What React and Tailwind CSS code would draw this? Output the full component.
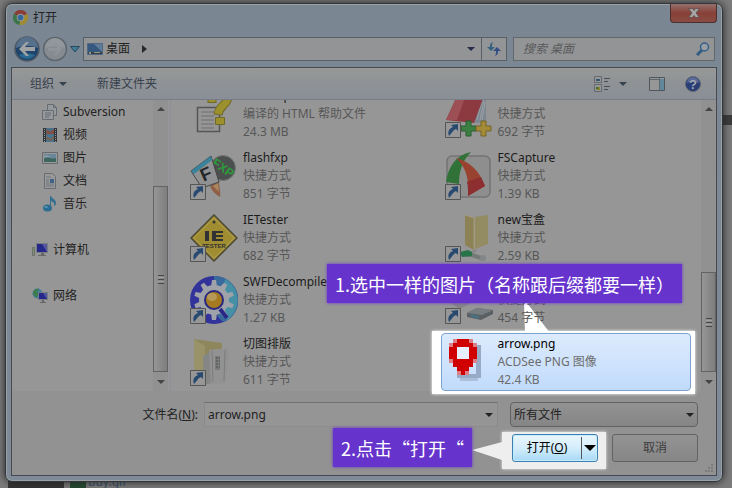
import React from 'react';

// --- Data ---
const SIDEBAR_ITEMS = [
  { id: 1, label: 'Subversion', icon: 'svn' },
  { id: 2, label: '视频', icon: 'video' },
  { id: 3, label: '图片', icon: 'picture' },
  { id: 4, label: '文档', icon: 'doc' },
  { id: 5, label: '音乐', icon: 'music' },
];

const FILES = [
  { id: 1, name: 'WinHelp', type: '编译的 HTML 帮助文件', size: '24.3 MB', icon: 'chm' },
  { id: 2, name: '', type: '快捷方式', size: '692 字节', icon: 'notes', shortcut: true },
  { id: 3, name: 'flashfxp', type: '快捷方式', size: '851 字节', icon: 'fxp', shortcut: true },
  { id: 4, name: 'FSCapture', type: '快捷方式', size: '1.39 KB', icon: 'capture', shortcut: true },
  { id: 5, name: 'IETester', type: '快捷方式', size: '682 字节', icon: 'ietester', shortcut: true },
  { id: 6, name: 'new宝盒', type: '快捷方式', size: '2.59 KB', icon: 'netfolder', shortcut: true },
  { id: 7, name: 'SWFDecompiler', type: '快捷方式', size: '1.27 KB', icon: 'swf', shortcut: true },
  { id: 8, name: '', type: '快捷方式', size: '454 字节', icon: 'drive', shortcut: true },
  { id: 9, name: '切图排版', type: '快捷方式', size: '611 字节', icon: 'folder', shortcut: true },
  { id: 10, name: 'arrow.png', type: 'ACDSee PNG 图像', size: '42.4 KB', icon: 'pin', selected: true },
];

const PIN_ROWS = ['.orrro.', 'orrrrro', 'rrwwwrr', 'rrwwwrr', 'rrwwwrr', 'orrrrro', '.rrrrr.', '..rrr..', '..oro..'];
const PIN_COLORS = { r: '#d00000', o: '#dc8088', w: '#e6effb' };

const GEAR_TEETH = [0, 36, 72, 108, 144, 180, 216, 252, 288, 324];

// --- Small icons ---
const SIDEBAR_ICONS = {
  svn: (
    <g fill="#979a9d" stroke="#666b74">
      <path d="M5.500.5h6l3 3v8h-9z" />
      <path d="M11.500.5v3h3" fill="none" />
      <path d="M.5 6.500h11v9H.500z" />
      <path d="M3 9h6M3 11h6M3 13h4" />
    </g>
  ),
  video: (
    <g>
      <path d="M1 1h14v14H1z" fill="#2f3539" />
      <path d="M4 1h8v7H4z" fill="#4b6f86" />
      <path d="M4 8h8v7H4z" fill="#4a7590" />
      <path d="m5 2 3 3 4-3v5H4z" fill="#844f42" />
      <path d="m5 9 3 3 4-3v3l-4 2-4-2z" fill="#79604c" />
      <path d="M2.500 2v13M13.500 2v13" stroke="#989898" strokeDasharray="1 1" />
    </g>
  ),
  picture: (
    <g>
      <path d="M.5 2.500h15v11H.500z" fill="#999" stroke="#666b70" />
      <path d="M2 4h12v8H2z" fill="#68869a" />
      <path d="M2 9c4-3 8 1 12-1v4H2z" fill="#3c665c" />
      <path d="M2 6c3-2 5 1 8 1H2z" fill="#8f9ba0" />
    </g>
  ),
  doc: (
    <g>
      <path d="M2.500.5h8l3 3v12h-11z" fill="#999" stroke="#696d72" />
      <path d="M4 4h5M4 7h3M4 9h3M4 11h8M4 13h8" stroke="#6f7780" />
      <path d="M8 6h4v4H8z" fill="#3f6288" />
    </g>
  ),
  music: (
    <g>
      <ellipse cx="5.500" cy="12" rx="4.500" ry="3.500" fill="#2b6d91" />
      <path d="M8 12V0h1c1 3 5 3 5 7 0 2-1 3-2 3 1-3-1-4-3-5v7z" fill="#356f90" />
      <ellipse cx="4" cy="11" rx="2" ry="1" fill="#5a90aa" />
    </g>
  ),
  computer: (
    <g>
      <path d="M4.500 1.500h11v9h-11z" fill="#26278a" stroke="#777b82" />
      <path d="m10 2 5 0v8z" fill="#5358a0" />
      <path d="M9 11h3v2h2v1H6v-1h3z" fill="#666" />
      <path d="M.5 5.500h2v8h-2z" fill="#829278" stroke="#6a6f68" />
    </g>
  ),
  network: (
    <g>
      <circle cx="5.500" cy="5.500" r="5" fill="#467ca0" />
      <path d="M1 4c1-3 4-4 6-3L5 4l2 2-3 4C3 8 2 7 1 7z" fill="#3b7d4d" />
      <path d="M6.500 4.500h9v7h-9z" fill="#26278a" stroke="#777b82" />
      <path d="m11 5 4 0v6z" fill="#5358a0" />
      <path d="M10 12h2v2h2v1H8v-1h2z" fill="#666" />
    </g>
  ),
};

const SmallIcon = ({ name }) => (
  <svg viewBox="0 0 16 16" className="h-4 w-4 shrink-0">{SIDEBAR_ICONS[name]}</svg>
);

const Caret = ({ className = '' }) => (
  <svg viewBox="0 0 8 4" className={`h-1 w-2 shrink-0 ${className}`}>
    <path d="M0 0h8L4 4z" fill="currentColor" />
  </svg>
);

// --- 48px file icons ---
const FILE_ICONS = {
  chm: (
    <g>
      <path d="M7.500 17.500h22v24h-22z" fill="#969696" stroke="#555" strokeWidth="1.500" />
      <path d="M11 22h13M11 26h13M11 30h13M11 34h13M11 38h13" stroke="#6e6e6e" />
      <path d="M22 13V8c1-10 16-10 16-1 0 8-9 8-10 18" fill="none" stroke="#6f6928" strokeWidth="9" />
      <path d="M22 12V8c1-10 16-10 16-1 0 8-9 8-10 17" fill="none" stroke="#9b902c" strokeWidth="7" />
      <path d="M25.500 27.500h9v7h-9z" fill="#9b902c" stroke="#6f6928" />
    </g>
  ),
  notes: (
    <g>
      <path d="m29 33 6-24h6v23z" fill="#7d8791" />
      <path d="m32 30 5-20m-2 20 4-20m-2 20 3-18" stroke="#9a9fa3" />
      <path d="M1 30 13 4l26 2-10 27z" fill="#8c3940" />
      <path d="m1 30 12-26 8 1-9 25z" fill="#9c5055" />
      <path d="M21 31h5v5h5v5h-5v5h-5v-5h-5v-5h5z" fill="#3c7f43" stroke="#285e30" />
      <path d="M36 31h5v5h5v5h-5v5h-5v-5h-5v-5h5z" fill="#a28a36" stroke="#756425" />
    </g>
  ),
  fxp: (
    <g>
      <circle cx="33" cy="16" r="12.500" fill="#4b4f4e" stroke="#777" />
      <text x="33" y="20" textAnchor="middle" transform="rotate(35 33 16)" fill="#2d9b3b" fontFamily="Liberation Sans, sans-serif" fontSize="12" fontWeight="700">FXP</text>
      <path d="m20 34 9-5c0 6 2 11 1 16-5-3-8-6-10-11z" fill="#8e5f46" />
      <path d="m23 34 5-3 1 9z" fill="#a8875d" />
      <path d="m1 19 20-15 8 26-17 6z" fill="#8f9192" stroke="#454545" />
      <path d="m1 19 20-15 1 4L4 22z" fill="#39829c" />
      <text x="16" y="28" textAnchor="middle" transform="rotate(-24 16 22)" fill="#262626" fontFamily="Liberation Sans, sans-serif" fontSize="18" fontWeight="700">F</text>
    </g>
  ),
  capture: (
    <g>
      <rect x="2" y="4" width="43" height="41" rx="5" fill="#8e8e8e" stroke="#747474" strokeWidth="1.500" />
      <path d="M1 30C3 15 11 3 26 0c-9 9-12 20-12 32z" fill="#317239" />
      <path d="M11 6c15 4 23 13 29 28l-17 10C24 28 22 16 11 6z" fill="#99422f" />
      <path d="M23 44c0-6 0-10-1-14l14-5 4 9z" fill="#8d2f30" />
    </g>
  ),
  ietester: (
    <g>
      <path d="M24 1 47 24 24 47 1 24z" fill="#a08d32" stroke="#4b4936" strokeWidth="1.500" />
      <path d="M24 4 44 24 24 44 4 24z" fill="none" stroke="#b0a04c" />
      <circle cx="24" cy="8" r="1.500" fill="#333" />
      <path d="M15 17h4v10h-4zM22 17h11v2h-7v2h7v2h-7v2h7v2H22z" fill="#303235" />
      <text x="24" y="34" textAnchor="middle" fill="#333" fontFamily="Liberation Sans, sans-serif" fontSize="6" fontWeight="700">TESTER</text>
    </g>
  ),
  netfolder: (
    <g>
      <path d="M30 3 43 1v29l-13 5z" fill="#938b62" />
      <path d="m20 1 9 3v32l-9-5z" fill="#8c8256" />
      <path d="m20 1 9 3v32" fill="none" stroke="#a39b75" />
      <path d="m31 36-6 4" stroke="#888" strokeWidth="3" />
      <path d="m15 40 12 1 12 4" stroke="#747b76" strokeWidth="4" />
      <path d="m15 38 8-2 4 2v4l-10 1z" fill="#267448" />
      <circle cx="38" cy="44" r="3" fill="#83878a" />
    </g>
  ),
  swf: (
    <g>
      <circle cx="24" cy="24" r="24" fill="#32339a" />
      <path d="M24 0a24 24 0 0 1 10 46C26 42 23 31 24 24z" fill="#396a9c" />
      <path d="M35 3a24 24 0 0 1 2 41l-7-10z" fill="#4690a6" />
      {GEAR_TEETH.map((angle) => (
        <path key={angle} d="M21 11 22 4h4l1 7z" transform={`rotate(${angle} 24 24)`} fill="#a0a2aa" />
      ))}
      <circle cx="24" cy="24" r="15" fill="#a0a2aa" />
      <circle cx="24" cy="24" r="9" fill="#a67a21" stroke="#282880" strokeWidth="2" />
      <ellipse cx="22" cy="21" rx="5" ry="4" fill="#b59a57" />
      <path d="m30 33 7 9" stroke="#292886" strokeWidth="4" />
    </g>
  ),
  drive: (
    <g>
      <path d="M5 27 22 22l7 3-14 8z" fill="#858585" />
      <path d="m22 37 10-5 16 2v4l-12 6-14-3z" fill="#5a6064" />
      <path d="m22 37 10-5 16 2-11 5z" fill="#777d80" />
      <path d="m26 38 8 2v3l-8-2z" fill="#4a7181" />
    </g>
  ),
  folder: (
    <g>
      <path d="m4 1 28 4v32L12 45 4 39z" fill="#8e875d" />
      <path d="m4 1 11 7v36L4 38z" fill="#9a9268" />
      <path d="m13 18 9-5v32l-8 2z" fill="#858686" />
      <path d="m19 12 20-2-3 35-15 1z" fill="#929292" />
      <path d="m22 13 1 31M35 12l-1 31" stroke="#7d7d7d" />
      <path d="M25 18h5v14h-5z" fill="#7a7b7b" />
      <path d="M26 20h4M26 23h4M26 26h4M26 29h4" stroke="#4d4f4f" strokeDasharray="2 1" />
    </g>
  ),
  pin: (
    <g shapeRendering="crispEdges">
      <path d="M31 7h5v33H12v-4h19z" fill="#97abc7" />
      <path d="M15 40h18v3H15z" fill="#adbfd8" />
      {PIN_ROWS.map((row, y) =>
        row.split('').map((cell, x) =>
          cell === '.' ? null : (
            <rect key={`${x}-${y}`} x={4 + x * 4} y={1 + y * 4} width="4" height="4" fill={PIN_COLORS[cell]} />
          )
        )
      )}
    </g>
  ),
};

const FileIcon = ({ name, shortcut }) => (
  <svg viewBox="0 0 48 48" className="h-12 w-12 shrink-0">
    {FILE_ICONS[name]}
    {shortcut && (
      <g>
        <path d="M.5 32.500h15v15H.500z" fill="#979797" stroke="#555" />
        <path d="M4 46c-2-5 1-8 4-9L6 35l7-1v7l-2-2c-3 1-4 4-7 7z" fill="#294a70" />
      </g>
    )}
  </svg>
);

// --- Pieces ---
const ScrollBar = ({ thumb }) => (
  <div className="flex w-[15px] shrink-0 flex-col items-center bg-[#919191] text-[#444]">
    <div className="flex h-[18px] items-center">
      <Caret className="rotate-180" />
    </div>
    <div className="flex-1" />
    <div className={`flex w-full flex-col items-center justify-center gap-px border border-[#626262] bg-gradient-to-r from-[#969696] to-[#7e7e7e] ${thumb}`}>
      <div className="h-px w-1.5 bg-[#484848]" />
      <div className="h-px w-1.5 bg-[#a0a0a0]" />
      <div className="h-px w-1.5 bg-[#484848]" />
      <div className="h-px w-1.5 bg-[#a0a0a0]" />
      <div className="h-px w-1.5 bg-[#484848]" />
    </div>
    <div className="flex h-[19px] items-center">
      <Caret />
    </div>
  </div>
);

const Callout = ({ children, className }) => (
  <div className={`absolute z-20 flex h-[39px] items-center whitespace-nowrap bg-[#6633cc] px-2 font-['Noto_Sans_CJK_SC',sans-serif] text-[18px] text-white shadow-[0_0_3px_#6633cc] ${className}`}>
    {children}
  </div>
);

const FileItem = ({ file }) => (
  <div className="relative flex h-[58px] min-w-0 items-center gap-[5px] px-1">
    {file.selected && (
      <>
        <div className="absolute -top-0.5 -right-1 -bottom-[3px] -left-[9px] bg-white shadow-[0_0_3px_#fff]" />
        <div className="absolute inset-0 rounded-sm border border-[#7da2ce] bg-gradient-to-b from-[#dcebfd] to-[#c1dbfc]" />
        <svg viewBox="0 0 26 30" className="absolute bottom-full left-[83px] h-[30px] w-[26px]">
          <path d="M0 0h3l23 30H1z" fill="#fff" />
        </svg>
        <Callout className="right-[9px] bottom-[88px]">1.选中一样的图片（名称跟后缀都要一样）</Callout>
      </>
    )}
    <div className="relative">
      <FileIcon name={file.icon} shortcut={file.shortcut} />
    </div>
    <div className={`relative z-10 min-w-0 whitespace-nowrap leading-[18px] ${file.selected ? 'text-[#6d6d6d]' : 'text-[#565656]'}`}>
      <p className={`h-[18px] ${file.selected ? 'text-black' : 'text-[#1c1c1c]'}`}>{file.name}</p>
      <p>{file.type}</p>
      <p>{file.size}</p>
    </div>
  </div>
);

const ChromeIcon = () => (
  <svg viewBox="0 0 16 16" className="h-[15px] w-[15px]">
    <path d="M8 8 1 4a8 8 0 0 1 14 0z" fill="#8c3c36" />
    <path d="M8 8 1 4a8 8 0 0 0 6 12z" fill="#3b7549" />
    <path d="M8 8 7 16A8 8 0 0 0 15 4z" fill="#a08b35" />
    <circle cx="8" cy="8" r="4" fill="#999" />
    <circle cx="8" cy="8" r="3" fill="#34679b" />
  </svg>
);

const App = () => {
  return (
    <div
      lang="zh-CN"
      className="relative flex h-screen overflow-hidden bg-[#7c7c7c] pt-[3px] pr-[9px] pb-1.5 pl-[5px] font-['Noto_Sans','Noto_Sans_CJK_SC',sans-serif] text-xs text-[#222]"
    >
      {/* Parts of the window behind */}
      <div className="absolute top-[115px] right-0 h-2.5 w-2.5 bg-[#3c3c3c]" />
      <div className="absolute bottom-0 left-2 flex h-3 items-center text-[#35506c]">
        <div className="h-3 w-14 bg-[#343434]" />
        <div className="ml-1.5 h-3 w-4 bg-[#244a31]" />
        <span className="ml-0.5">buy.gif</span>
      </div>

      {/* Dialog */}
      <div className="relative flex min-w-0 flex-1 flex-col rounded-[7px] border border-[#33373b] bg-gradient-to-b from-[#7a8692] to-[#7f8b98] px-[5px] pb-[5px] shadow-[inset_0_0_0_1px_#9aa0a5,0_0_8px_#222]">
        {/* Title bar */}
        <div className="flex h-[33px] shrink-0 items-start justify-between">
          <div className="flex h-[27px] items-center gap-[5px] pl-0.5">
            <ChromeIcon />
            <span>打开</span>
          </div>
          <button
            aria-label="关闭"
            className="flex h-[19px] w-[47px] items-center justify-center rounded-b border border-t-0 border-[#4b2e2e] bg-gradient-to-b from-[#93706c] via-[#874037] to-[#8a4c43]"
          >
            <svg viewBox="0 0 12 10" className="h-2.5 w-3">
              <path d="M.5.5h4L6 2.500 7.500.5h4L8 5l3.500 4.500h-4L6 7.500l-1.500 2h-4L4 5z" fill="#a6a6a6" stroke="#554545" strokeWidth=".7" />
            </svg>
          </button>
        </div>

        {/* Address row */}
        <div className="flex h-6 shrink-0 items-center pr-0.5 pl-[3px]">
          <button aria-label="后退" className="h-[26px] w-[26px]">
            <svg viewBox="0 0 26 26">
              <circle cx="13" cy="13" r="12" fill="#1f456d" stroke="#4f5a65" strokeWidth="1.500" />
              <path d="M2 12a11 11 0 0 1 22 0c-7-3-15-3-22 0z" fill="#57708c" />
              <path d="M5 19c4 5 12 5 16 0-4-2-12-2-16 0z" fill="#2a6b91" />
              <path d="m5 13 7-7h3l-4 5h10v4H11l4 5h-3z" fill="#a0a2a3" />
            </svg>
          </button>
          <button aria-label="前进" className="ml-0.5 h-[26px] w-[26px]">
            <svg viewBox="0 0 26 26">
              <circle cx="13" cy="13" r="11.500" fill="#858b90" stroke="#5d656c" strokeWidth="1.500" />
              <path d="M3 12a10 10 0 0 1 20 0c-6-2-14-2-20 0z" fill="#92979b" />
              <path d="m20 13-6-6h-2l3 5H6v3h9l-3 4h2z" fill="#8f9498" />
            </svg>
          </button>
          <button aria-label="最近位置" className="ml-px flex w-3 justify-center">
            <svg viewBox="0 0 10 7" className="h-[7px] w-2.5">
              <path d="M.5.5h9L5 6z" fill="#3e7d98" stroke="#2d465c" />
            </svg>
          </button>
          <div className="ml-0.5 flex h-6 min-w-0 flex-1 items-center border border-[#595f66] bg-[#929496] pl-[3px]">
            <svg viewBox="0 0 16 12" className="h-3 w-4">
              <path d="M.5.5h15v11H.500z" fill="#365780" stroke="#536783" />
              <path d="m7 1 8 0v8z" fill="#5f7b97" />
              <path d="M1 9h14v2H1z" fill="#37404a" />
              <path d="M2 9h2v2H2zM7 9h6v1H7z" fill="#8f9b7a" />
            </svg>
            <span className="ml-[3px]">桌面</span>
            <svg viewBox="0 0 5 8" className="ml-3 h-2 w-[5px]">
              <path d="m0 0 5 4-5 4z" fill="#282828" />
            </svg>
            <Caret className="mr-1.5 ml-auto text-[#262b48]" />
            <button aria-label="刷新" className="flex h-full w-[25px] items-center justify-center border-l border-[#595f66]">
              <svg viewBox="0 0 16 14" className="h-3.5 w-4">
                <path d="M7 0C4 1 4 3 4 5H1l4 4 4-4H6c0-2 0-3 1-5z" fill="#34617f" />
                <path d="M9 14c3-1 3-3 3-5h3l-4-4-4 4h3c0 2 0 3-1 5z" fill="#344e84" />
              </svg>
            </button>
          </div>
          <div className="ml-1.5 flex h-6 w-[202px] items-center border border-[#62676c] bg-[#929496] pr-1 pl-[9px]">
            <input
              type="text"
              aria-label="搜索 桌面"
              placeholder="搜索 桌面"
              className="min-w-0 flex-1 bg-transparent italic outline-none placeholder:text-[#5a5a5a]"
            />
            <svg viewBox="0 0 14 14" className="h-3.5 w-3.5">
              <path d="m6 8-5 5" stroke="#315b80" strokeWidth="3" />
              <circle cx="8.500" cy="5" r="4" fill="#98a0a6" stroke="#365f87" strokeWidth="1.500" />
            </svg>
          </div>
        </div>

        {/* Content */}
        <div className="relative mt-1.5 flex min-h-0 flex-1 flex-col border border-[#454b51] bg-[#929292]">
          {/* Toolbar */}
          <div className="flex h-8 shrink-0 items-center border-b border-[#777d86] bg-gradient-to-b from-[#979998] via-[#8f9295] to-[#8a8f97] pr-[15px] pl-[18px] text-[#38414e]">
            <button className="flex items-center gap-[5px]">
              组织
              <Caret />
            </button>
            <button className="ml-[30px]">新建文件夹</button>
            <button aria-label="更改视图" className="ml-auto flex items-center gap-[9px]">
              <svg viewBox="0 0 16 16" className="h-4 w-4">
                <path d="M.5.5h7v6h-7zM.5 8.500h7v7h-7z" fill="#979797" stroke="#66696d" />
                <path d="M2 3h4v2H2z" fill="#315670" />
                <path d="M2 11h4v3H2z" fill="#8a8327" />
                <path d="M2 11h2v2H2z" fill="#36703f" />
                <path d="M10 2.500h6M10 5.500h4M10 10.500h6M10 13.500h4" stroke="#4a4f57" />
              </svg>
              <Caret />
            </button>
            <button aria-label="预览窗格" className="ml-[22px]">
              <svg viewBox="0 0 16 14" className="h-3.5 w-4">
                <path d="M.5.5h15v13H.500z" fill="#979797" stroke="#50565e" />
                <path d="M1 2.500h14M10.500 1v12" stroke="#60666e" />
                <path d="M11 2h4v11h-4z" fill="#61899b" />
              </svg>
            </button>
            <button aria-label="帮助" className="ml-5">
              <svg viewBox="0 0 16 16" className="h-4 w-4">
                <circle cx="8" cy="8" r="7.500" fill="#293d77" stroke="#606775" />
                <path d="M2 7a6 6 0 0 1 12 0c-4-2-8-2-12 0z" fill="#5b6a97" />
                <text x="8" y="12.500" textAnchor="middle" fill="#a3a6ad" fontFamily="Liberation Sans, sans-serif" fontSize="13" fontWeight="700">?</text>
              </svg>
            </button>
          </div>

          {/* Panes */}
          <div className="flex min-h-0 flex-1 bg-[#969696]">
            <nav className="flex w-[141px] shrink-0 flex-col">
              {SIDEBAR_ITEMS.map((item) => (
                <a key={item.id} href="#" className="flex h-[23px] items-center gap-[5px] pl-[30px]">
                  <SmallIcon name={item.icon} />
                  {item.label}
                </a>
              ))}
              <a href="#" className="mt-[23px] flex h-[23px] items-center gap-[5px] pl-5">
                <SmallIcon name="computer" />
                计算机
              </a>
              <a href="#" className="mt-[23px] flex h-[23px] items-center gap-[5px] pl-5">
                <SmallIcon name="network" />
                网络
              </a>
            </nav>
            <ScrollBar thumb="h-[186px]" />

            <div className="ml-0.5 flex min-w-0 flex-1 flex-col justify-end border-l border-[#8a8f98] pr-2.5 pl-[15px] [clip-path:inset(0_-10px_-10px_0)]">
              <div className="grid grid-cols-2 gap-1">
                {FILES.map((file) => (
                  <FileItem key={file.id} file={file} />
                ))}
              </div>
            </div>
            <ScrollBar thumb="h-[100px]" />
          </div>

          {/* Footer */}
          <div className="flex shrink-0 flex-col gap-[7px] pt-[11px] pr-[18px] pb-[13px]">
            <div className="flex items-center">
              <label htmlFor="filename" className="w-[186px] shrink-0 text-right">
                文件名(<u>N</u>):
              </label>
              <div className="ml-1.5 flex h-[25px] min-w-0 flex-1 items-center border border-t-[#707070] border-x-[#8a8a8a] border-b-[#8c8c8c] bg-[#959595] pr-1 pl-[3px]">
                <input id="filename" type="text" defaultValue="arrow.png" className="min-w-0 flex-1 bg-transparent outline-none" />
                <Caret />
              </div>
              <div className="relative ml-3 w-[188px]">
                <select aria-label="文件类型" className="h-[25px] w-full appearance-none rounded-sm border border-[#626262] bg-gradient-to-b from-[#939393] to-[#858585] pl-[3px]">
                  <option>所有文件</option>
                </select>
                <Caret className="pointer-events-none absolute top-[11px] right-1" />
              </div>
            </div>
            <div className="flex justify-end gap-[14px]">
              <div className="relative">
                <div className="absolute -top-0.5 -right-2 -bottom-[7px] -left-2.5 bg-[#eee] shadow-[0_0_3px_#eee]" />
                <svg viewBox="0 0 30 18" className="absolute top-2 right-full mr-2.5 h-[18px] w-[30px]">
                  <path d="M0 8 30 0v18z" fill="#eee" />
                </svg>
                <Callout className="-top-[6px] right-full mr-10">2.点击“打开“</Callout>
                <button className="relative flex h-[28px] w-[86px] items-center rounded-[3px] border border-[#3c7fb1] bg-gradient-to-b from-[#eaf6fd] via-[#d3edfb] to-[#a7d9f5] text-black shadow-[inset_0_0_0_1px_#c9ecfc]">
                  <span className="flex-1">
                    打开(<u>O</u>)
                  </span>
                  <span className="flex h-[22px] w-4 items-center justify-center border-l border-[#555]">
                    <svg viewBox="0 0 12 6" className="h-1.5 w-3">
                      <path d="M0 0h12L6 6z" />
                    </svg>
                  </span>
                </button>
              </div>
              <button className="h-[28px] w-[86px] rounded-[3px] border border-[#626262] bg-gradient-to-b from-[#939393] to-[#868686] text-[#3c3c3c]">
                取消
              </button>
            </div>
          </div>

          {/* Resize grip */}
          <svg viewBox="0 0 9 9" className="absolute right-0.5 bottom-0.5 h-[9px] w-[9px]">
            <path d="M6 0h2v2H6zM3 3h2v2H3zM6 3h2v2H6zM0 6h2v2H0zM3 6h2v2H3zM6 6h2v2H6z" fill="#7a7a7a" />
          </svg>
        </div>
      </div>
    </div>
  );
};

export default App;
